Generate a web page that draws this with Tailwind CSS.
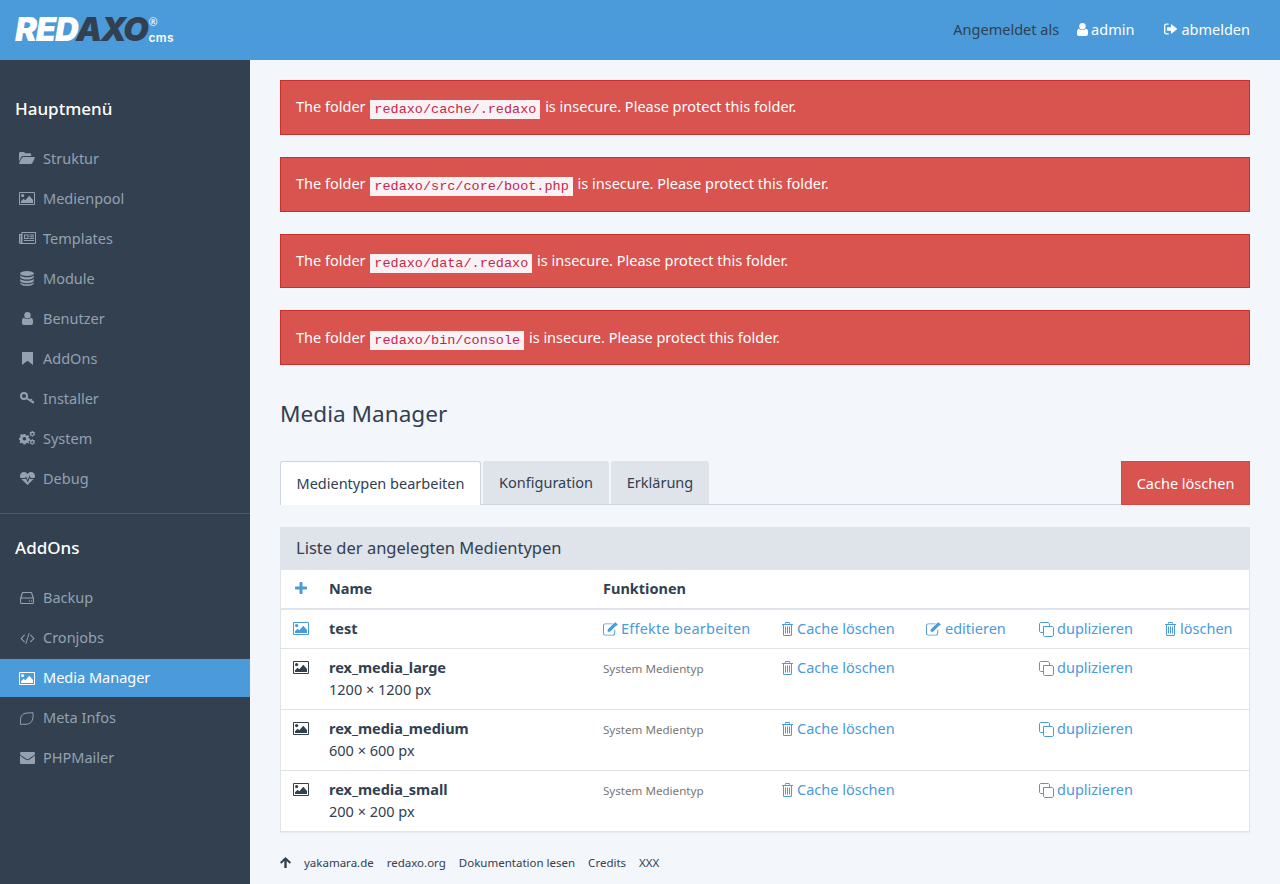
<!DOCTYPE html>
<html lang="de">
<head>
<meta charset="UTF-8" />
<title>Media Manager</title>
<script src="https://cdn.jsdelivr.net/npm/@tailwindcss/browser@4"></script>
</head>
<body class="bg-[#f3f6fb] text-[#324050] font-['Noto_Sans',sans-serif] text-[14.5px] leading-[22px] h-screen overflow-hidden">

<svg class="hidden">
  <symbol id="i-image" viewBox="0 0 16 13"><path fill-rule="evenodd" d="M1 0h14a1 1 0 0 1 1 1v11a1 1 0 0 1-1 1H1a1 1 0 0 1-1-1V1a1 1 0 0 1 1-1zm0 1v11h14V1z"/><circle cx="3.6" cy="3.6" r="1.6"/><path d="M2 11V9.2l2.6-2.4 1.7 1.5 4-4.6L14 8v3z"/></symbol>
  <symbol id="i-folder" viewBox="0 0 16 12"><path d="M0 10V1.4C0 .6.6 0 1.4 0h3C5.2 0 5.800.5 5.800 1.300h5c.8 0 1.400.5 1.400 1.300V4H4.400c-1 0-1.800.5-2.400 1.300z"/><path d="M1 12c-.8 0-1.100-.6-.6-1.200L2.700 6c.5-.7 1.100-1 1.900-1H15c.8 0 1.200.6.700 1.200l-2.300 4.700c-.5.7-1.100 1.100-1.900 1.100z"/></symbol>
  <symbol id="i-news" viewBox="0 0 17 12"><path fill-rule="evenodd" d="M2.500 0H17v10.800c0 .7-.5 1.200-1.200 1.200H1.200C.5 12 0 11.500 0 10.800V2h2.500zm1 1v9.600c0 .2-.1.300-.2.400h12.400c.2 0 .3-.1.300-.3V1zM1 3v7.700c0 .2.100.3.300.3s.2-.1.200-.3V3z"/><path fill-rule="evenodd" d="M5 2.500h4.500V7H5zm1 1V6h2.500V3.500z"/><path d="M10.500 2.500H15v1h-4.500zM10.500 4.300H15v1h-4.500zM10.500 6H15v1h-4.500zM5 8h10v1H5z"/></symbol>
  <symbol id="i-db" viewBox="0 0 14 15"><ellipse cx="7" cy="2.500" rx="6.800" ry="2.500"/><path d="M.2 4.200C1 5.600 4 6.200 7 6.200s6-.6 6.800-2v2C13 7.800 10 8.500 7 8.500S1 7.800.2 6.200zM.2 7.800C1 9.200 4 9.800 7 9.800s6-.6 6.800-2V10c-.8 1.500-3.800 2.200-6.800 2.200S1 11.500.2 10zM.2 11.300c.8 1.400 3.800 2 6.800 2s6-.6 6.800-2v1.200C13 14.200 10 15 7 15s-6-.8-6.800-2.500z"/></symbol>
  <symbol id="i-user" viewBox="0 0 11 13"><circle cx="5.500" cy="3.200" r="3.200"/><path d="M2 5.800c.9.900 2.100 1.300 3.500 1.300S8.100 6.700 9 5.800c1.300.1 2 1.400 2 3.500v1.700c0 1.200-.8 2-2 2H2c-1.200 0-2-.8-2-2V9.300c0-2.100.7-3.400 2-3.500z"/></symbol>
  <symbol id="i-bookmark" viewBox="0 0 11 13"><path d="M0 0h11v13L5.500 8.800 0 13z"/></symbol>
  <symbol id="i-key" viewBox="0 0 15 12"><circle cx="4" cy="4" r="3" fill="none" stroke="currentColor" stroke-width="2"/><path fill="none" stroke="currentColor" stroke-width="1.800" d="M6.300 6 13.800 11M10.300 8.600l1.500-1.500M12.300 10l1-1.200"/></symbol>
  <symbol id="i-cogs" viewBox="0 0 16 14"><path fill-rule="evenodd" d="M4.400 3h2l.3 1.300 1 .4 1.200-.7 1.300 1.300-.7 1.200.4 1 1.300.3v1.900l-1.300.3-.4 1 .7 1.200L9 12.500 7.800 11.800l-1 .4-.4 1.300h-2L4 12.200l-1-.4-1.200.7L.5 11.200l.7-1.200-.4-1L0 8.700V6.800l1.300-.3.4-1L1 4.300 2.300 3l1.200.7 1-.4zm1 3a1.800 1.800 0 1 0 0 3.600 1.800 1.800 0 0 0 0-3.600z"/><path fill-rule="evenodd" d="M12.700 0h1.200l.2.800.6.300.8-.3.500 1-.6.600v.7l.6.500-.5 1-.8-.2-.6.400-.2.800h-1.200l-.2-.800-.6-.4-.8.200-.5-1 .6-.5v-.7l-.6-.6.500-1 .8.300.6-.3zm.6 2a1 1 0 1 0 0 2 1 1 0 0 0 0-2zM12.700 8.200h1.200l.2.800.6.300.8-.3.500 1-.6.600v.7l.6.500-.5 1-.8-.2-.6.400-.2.800h-1.200l-.2-.8-.6-.4-.8.200-.5-1 .6-.5v-.7l-.6-.6.500-1 .8.300.6-.3zm.6 2a1 1 0 1 0 0 2 1 1 0 0 0 0-2z"/></symbol>
  <symbol id="i-heart" viewBox="0 0 15 13"><path d="M4 0c1.400 0 2.700.8 3.500 2C8.300.8 9.600 0 11 0c2.300 0 4 1.700 4 4 0 .7-.2 1.400-.5 2H10.700L9.400 3.500 7.800 8 6 4.500 5.100 6H.5A4.400 4.400 0 0 1 0 4c0-2.300 1.700-4 4-4z"/><path d="M1.300 7h4.400l.2-.4L7.900 10.500 9.600 6l.5 1h3.600L7.500 13z"/></symbol>
  <symbol id="i-hdd" viewBox="0 0 14 12"><path fill-rule="evenodd" d="M3 0h8c.6 0 1 .3 1.200.8L14 6.500V10.500c0 .9-.6 1.500-1.500 1.500h-11C.6 12 0 11.400 0 10.500V6.500L1.800.8C2 .3 2.400 0 3 0zm0 1L1.500 5.600c0-.1.400-.1.500-.1h10c.1 0 .4 0 .5.100L11 1zM2 6.500c-.5 0-1 .4-1 1v3c0 .3.300.5.500.5h11c.2 0 .5-.2.500-.5v-3c0-.6-.5-1-1-1z"/><circle cx="11.700" cy="9" r=".7"/><circle cx="9.500" cy="9" r=".7"/></symbol>
  <symbol id="i-code" viewBox="0 0 15 11"><path d="M4.300 1.500 5 2.200 1.800 5.500 5 8.800l-.7.700L.4 5.500zM10.700 1.500 10 2.200l3.200 3.300L10 8.800l.7.700 3.900-4zM8.700 0l.9.200L6.300 11l-.9-.2z"/></symbol>
  <symbol id="i-leaf" viewBox="0 0 14 13"><path fill="none" stroke="currentColor" d="M13 .7c.3 3.600 0 7-1.600 9.200-1.500 2-4.400 2.500-7.400 2.400-1 0-2 0-3.300.2-.3-1-.3-2-.3-3.500C.4 4.800 1.600 2.800 4 1.700 6.600.6 10 1 13 .7z"/></symbol>
  <symbol id="i-mail" viewBox="0 0 15 12"><path d="M1.300 0h12.400C14.500 0 15 .5 15 1.300c0 .9-.6 1.600-1.300 2.100L8.400 7c-.6.400-1.200.4-1.800 0L1.300 3.400C.6 2.900 0 2.200 0 1.500 0 .6.500 0 1.300 0z"/><path d="M0 3.400c1.900 1.500 4 2.800 5.900 4.300.9.600 2.300.6 3.200 0C11 6.200 13.100 4.900 15 3.400v7.300c0 .7-.6 1.300-1.300 1.300H1.300C.6 12 0 11.400 0 10.700z"/></symbol>
  <symbol id="i-plus" viewBox="0 0 12 12"><path d="M4.500 1c0-.6.400-1 1-1h1c.6 0 1 .4 1 1v3.500H11c.6 0 1 .4 1 1v1c0 .6-.4 1-1 1H7.500V11c0 .6-.4 1-1 1h-1c-.6 0-1-.4-1-1V7.500H1c-.6 0-1-.4-1-1v-1c0-.6.400-1 1-1h3.500z"/></symbol>
  <symbol id="i-edit" viewBox="0 0 16 14"><path d="M2.500 1h8l-1 1h-7C1.700 2 1 2.700 1 3.500v8C1 12.300 1.700 13 2.500 13h8c.8 0 1.500-.7 1.500-1.500V8.300l1-1v4.200c0 1.400-1.100 2.500-2.500 2.500h-8A2.500 2.500 0 0 1 0 11.500v-8A2.500 2.500 0 0 1 2.500 1z"/><path d="M5 7.500 12 .5 14.500 3l-7 7H5zM12.800 0l.4-.2 2.500 2.500-.2.400-.9.900-2.700-2.700z"/></symbol>
  <symbol id="i-trash" viewBox="0 0 11 14"><path fill-rule="evenodd" d="M3.500 0h4L8.400 2H11v1h-1v9.500c0 .8-.6 1.500-1.300 1.500H2.300C1.600 14 1 13.300 1 12.500V3H0V2h2.600zm.3 1-.3 1h4l-.3-1zM2 3v9.500c0 .3.200.5.300.5h6.400c.1 0 .3-.2.300-.5V3z"/><path d="M3 4.500h1v7H3zM5 4.500h1v7H5zM7 4.500h1v7H7z"/></symbol>
  <symbol id="i-files" viewBox="0 0 15 15"><path fill="none" stroke="currentColor" d="M4.500 4.500h8.500c.8 0 1.500.7 1.500 1.500v7c0 .8-.7 1.500-1.500 1.500H6c-.8 0-1.500-.7-1.500-1.500zM4.500 10.500H2c-.8 0-1.500-.7-1.500-1.500V2C.5 1.200 1.200.5 2 .5h7c.8 0 1.500.7 1.500 1.500v2.500"/></symbol>
  <symbol id="i-signout" viewBox="0 0 14 12"><path d="M2.500 0H5v1.500H2.500c-.6 0-1 .4-1 1v7c0 .6.400 1 1 1H5V12H2.500A2.500 2.500 0 0 1 0 9.500v-7A2.500 2.500 0 0 1 2.500 0z"/><path d="M8 1c.2 0 .5.100.6.300l5.200 4.200c.2.200.2.800 0 1L8.600 10.700c-.4.400-1.100.1-1.100-.5V8H4c-.4 0-.8-.4-.8-.8V4.800c0-.4.400-.8.800-.8h3.500V1.800c0-.4.100-.8.500-.8z"/></symbol>
  <symbol id="i-up" viewBox="0 0 11 11"><path d="M5.500 0 11 5.300 9.700 6.700 6.700 3.900V11H4.300V3.900L1.300 6.700 0 5.300z"/></symbol>
</svg>

<!-- Header -->
<header class="h-[60px] bg-[#4b9ad9] flex items-center justify-between pl-[15px] pr-[30px]">
  <a class="flex items-start h-[26px] mb-[3px]" href="#">
    <span class="font-['Inter',sans-serif] font-black italic text-[33px] leading-[26px] tracking-[-1.300px] text-white">RED<span class="text-[#324050]">AXO</span></span>
    <span class="ml-[1px] flex flex-col">
      <span class="text-[11px] leading-[10px] mt-[1px] text-white">®</span>
      <span class="font-['Inter',sans-serif] text-[12px] leading-[11px] mt-[5px] font-semibold tracking-[0.300px] text-white">cms</span>
    </span>
  </a>
  <div class="flex items-center mb-[2px]">
    <span>Angemeldet als</span>
    <a href="#" class="ml-[18px] flex items-center text-white"><svg class="w-[11px] h-[13px] mr-[3px] fill-current"><use href="#i-user"/></svg>admin</a>
    <a href="#" class="ml-[30px] flex items-center text-white"><svg class="w-[13px] h-[12px] mr-[4px] fill-current"><use href="#i-signout"/></svg>abmelden</a>
  </div>
</header>

<div class="flex h-[824px]">
  <!-- Sidebar -->
  <nav class="w-[250px] shrink-0 bg-[#324050] text-[#94a1af] pt-[36px]">
    <h2 class="pl-[15px] h-[26px] leading-[26px] text-[17px] font-medium text-white">Hauptmenü</h2>
    <ul class="mt-[17px] flex flex-col gap-[2px]">
      <li class="h-[38px] pl-[19px] flex items-center"><span class="w-[16px] mr-[8px] flex justify-center"><svg class="w-[16px] h-[12px] fill-current"><use href="#i-folder"/></svg></span>Struktur</li>
      <li class="h-[38px] pl-[19px] flex items-center"><span class="w-[16px] mr-[8px] flex justify-center"><svg class="w-[16px] h-[13px] fill-current"><use href="#i-image"/></svg></span>Medienpool</li>
      <li class="h-[38px] pl-[19px] flex items-center"><span class="w-[16px] mr-[8px] flex justify-center"><svg class="w-[17px] h-[12px] shrink-0 fill-current"><use href="#i-news"/></svg></span>Templates</li>
      <li class="h-[38px] pl-[19px] flex items-center"><span class="w-[16px] mr-[8px] flex justify-center"><svg class="w-[14px] h-[15px] fill-current"><use href="#i-db"/></svg></span>Module</li>
      <li class="h-[38px] pl-[19px] flex items-center"><span class="w-[16px] mr-[8px] flex justify-center"><svg class="w-[11px] h-[13px] fill-current"><use href="#i-user"/></svg></span>Benutzer</li>
      <li class="h-[38px] pl-[19px] flex items-center"><span class="w-[16px] mr-[8px] flex justify-center"><svg class="w-[11px] h-[13px] fill-current"><use href="#i-bookmark"/></svg></span>AddOns</li>
      <li class="h-[38px] pl-[19px] flex items-center"><span class="w-[16px] mr-[8px] flex justify-center"><svg class="w-[15px] h-[12px] fill-current"><use href="#i-key"/></svg></span>Installer</li>
      <li class="h-[38px] pl-[19px] flex items-center"><span class="w-[16px] mr-[8px] flex justify-center"><svg class="w-[16px] h-[14px] fill-current"><use href="#i-cogs"/></svg></span>System</li>
      <li class="h-[38px] pl-[19px] flex items-center"><span class="w-[16px] mr-[8px] flex justify-center"><svg class="w-[15px] h-[13px] fill-current"><use href="#i-heart"/></svg></span>Debug</li>
    </ul>
    <hr class="mt-[16px] border-t border-[#4c5a69]" />
    <h2 class="mt-[21px] pl-[15px] h-[26px] leading-[26px] text-[17px] font-medium text-white">AddOns</h2>
    <ul class="mt-[18px] flex flex-col gap-[2px]">
      <li class="h-[38px] pl-[19px] flex items-center"><span class="w-[16px] mr-[8px] flex justify-center"><svg class="w-[14px] h-[12px] fill-current"><use href="#i-hdd"/></svg></span><span class="mb-[2px]">Backup</span></li>
      <li class="h-[38px] pl-[19px] flex items-center"><span class="w-[16px] mr-[8px] flex justify-center"><svg class="w-[15px] h-[11px] fill-current"><use href="#i-code"/></svg></span><span class="mb-[2px]">Cronjobs</span></li>
      <li class="h-[38px] pl-[19px] flex items-center bg-[#4b9ad9] text-white"><span class="w-[16px] mr-[8px] flex justify-center"><svg class="w-[16px] h-[13px] fill-current"><use href="#i-image"/></svg></span><span class="mb-[2px]">Media Manager</span></li>
      <li class="h-[38px] pl-[19px] flex items-center"><span class="w-[16px] mr-[8px] flex justify-center"><svg class="w-[14px] h-[13px] fill-current"><use href="#i-leaf"/></svg></span><span class="mb-[2px]">Meta Infos</span></li>
      <li class="h-[38px] pl-[19px] flex items-center"><span class="w-[16px] mr-[8px] flex justify-center"><svg class="w-[15px] h-[12px] fill-current"><use href="#i-mail"/></svg></span><span class="mb-[2px]">PHPMailer</span></li>
    </ul>
  </nav>

  <!-- Main -->
  <main class="flex-1 px-[30px] pt-[20px]">
    <div class="flex flex-col gap-[22px]">
      <div class="h-[54.800px] flex items-center px-[15px] bg-[#d9534f] border border-[#c9302c] text-white">
        <p>The folder <code class="font-['Liberation_Mono',monospace] text-[13.500px] leading-[19px] inline-block align-[-1px] px-[4px] mx-[1px] bg-[#f9f2f4] text-[#c7254e]">redaxo/cache/.redaxo</code> is insecure. Please protect this folder.</p>
      </div>
      <div class="h-[54.800px] flex items-center px-[15px] bg-[#d9534f] border border-[#c9302c] text-white">
        <p>The folder <code class="font-['Liberation_Mono',monospace] text-[13.500px] leading-[19px] inline-block align-[-1px] px-[4px] mx-[1px] bg-[#f9f2f4] text-[#c7254e]">redaxo/src/core/boot.php</code> is insecure. Please protect this folder.</p>
      </div>
      <div class="h-[54.800px] flex items-center px-[15px] bg-[#d9534f] border border-[#c9302c] text-white">
        <p>The folder <code class="font-['Liberation_Mono',monospace] text-[13.500px] leading-[19px] inline-block align-[-1px] px-[4px] mx-[1px] bg-[#f9f2f4] text-[#c7254e]">redaxo/data/.redaxo</code> is insecure. Please protect this folder.</p>
      </div>
      <div class="h-[54.800px] flex items-center px-[15px] bg-[#d9534f] border border-[#c9302c] text-white">
        <p>The folder <code class="font-['Liberation_Mono',monospace] text-[13.500px] leading-[19px] inline-block align-[-1px] px-[4px] mx-[1px] bg-[#f9f2f4] text-[#c7254e]">redaxo/bin/console</code> is insecure. Please protect this folder.</p>
      </div>
    </div>

    <h1 class="mt-[31.800px] h-[34px] leading-[34px] text-[22.600px] font-normal">Media Manager</h1>

    <!-- Tabs -->
    <div class="mt-[30px] h-[44px] flex items-stretch justify-between border-b border-[#ced4e0]">
      <div class="flex gap-[2px]">
        <a href="#" class="w-[201px] h-[44px] flex items-center justify-center bg-white border border-b-0 border-[#ced4e0] rounded-t-[3px]">Medientypen bearbeiten</a>
        <a href="#" class="w-[126px] h-[43px] flex items-center justify-center bg-[#dfe3ea] rounded-t-[3px]">Konfiguration</a>
        <a href="#" class="w-[98px] h-[43px] flex items-center justify-center bg-[#dfe3ea] rounded-t-[3px]">Erklärung</a>
      </div>
      <a href="#" class="w-[129px] h-[44px] flex items-center justify-center bg-[#d9534f] border border-[#d64a45] text-white">Cache löschen</a>
    </div>

    <!-- Panel -->
    <section class="mt-[22px]">
      <h3 class="h-[43px] flex items-center px-[16px] bg-[#dfe3ea] text-[16.500px] font-normal">Liste der angelegten Medientypen</h3>
      <div class="bg-white border-x border-b border-[#dfe3ea] shadow-[0_1px_1px_rgba(0,0,0,0.04)]">
        <table class="w-full table-fixed border-separate border-spacing-0 text-left">
          <colgroup>
            <col class="w-[33px]" /><col class="w-[274px]" /><col class="w-[179px]" /><col class="w-[144px]" /><col class="w-[113px]" /><col class="w-[126px]" /><col />
          </colgroup>
          <thead>
            <tr class="h-[40px]">
              <th class="border-b-2 border-[#dfe3ea] pl-[14px] pb-[2px]"><svg class="w-[12px] h-[12px] fill-[#4b9ad9]"><use href="#i-plus"/></svg></th>
              <th class="border-b-2 border-[#dfe3ea] pl-[15px] pb-[2px] font-bold">Name</th>
              <th colspan="5" class="border-b-2 border-[#dfe3ea] pl-[15px] pb-[2px] font-bold">Funktionen</th>
            </tr>
          </thead>
          <tbody class="align-top">
            <tr class="text-[#4b9ad9]">
              <td class="border-b border-[#dfe3ea] pl-[12px] pt-[8px] pb-[8px]"><svg class="w-[16px] h-[13px] mt-[4px] fill-current"><use href="#i-image"/></svg></td>
              <td class="border-b border-[#dfe3ea] pl-[15px] pt-[7px] pb-[9px] font-bold text-[#324050]">test</td>
              <td class="border-b border-[#dfe3ea] pl-[15px] pt-[7px] pb-[9px] whitespace-nowrap tracking-[0.220px]"><svg class="inline-block w-[15px] h-[14px] mr-[3px] align-[-2px] fill-current"><use href="#i-edit"/></svg>Effekte bearbeiten</td>
              <td class="border-b border-[#dfe3ea] pl-[15px] pt-[7px] pb-[9px] whitespace-nowrap"><svg class="inline-block w-[11px] h-[14px] mr-[4px] align-[-2px] fill-current"><use href="#i-trash"/></svg>Cache löschen</td>
              <td class="border-b border-[#dfe3ea] pl-[15px] pt-[7px] pb-[9px] whitespace-nowrap"><svg class="inline-block w-[15px] h-[14px] mr-[4px] align-[-2px] fill-current"><use href="#i-edit"/></svg>editieren</td>
              <td class="border-b border-[#dfe3ea] pl-[15px] pt-[7px] pb-[9px] whitespace-nowrap"><svg class="inline-block w-[15px] h-[15px] mr-[3px] align-[-3px] fill-current"><use href="#i-files"/></svg>duplizieren</td>
              <td class="border-b border-[#dfe3ea] pl-[15px] pt-[7px] pb-[9px] whitespace-nowrap"><svg class="inline-block w-[11px] h-[14px] mr-[4px] align-[-2px] fill-current"><use href="#i-trash"/></svg>löschen</td>
            </tr>
            <tr class="text-[#4b9ad9]">
              <td class="border-b border-[#dfe3ea] pl-[12px] pt-[8px] pb-[8px] text-[#324050]"><svg class="w-[16px] h-[13px] mt-[4px] fill-current"><use href="#i-image"/></svg></td>
              <td class="border-b border-[#dfe3ea] pl-[15px] pt-[7px] pb-[9px] text-[#324050]"><b>rex_media_large</b><br />1200 × 1200 px</td>
              <td class="border-b border-[#dfe3ea] pl-[15px] pt-[10px] pb-[8px] text-[11.600px] text-[#777] leading-[20px]">System Medientyp</td>
              <td class="border-b border-[#dfe3ea] pl-[15px] pt-[7px] pb-[9px] whitespace-nowrap"><svg class="inline-block w-[11px] h-[14px] mr-[4px] align-[-2px] fill-current"><use href="#i-trash"/></svg>Cache löschen</td>
              <td class="border-b border-[#dfe3ea]"></td>
              <td class="border-b border-[#dfe3ea] pl-[15px] pt-[7px] pb-[9px] whitespace-nowrap"><svg class="inline-block w-[15px] h-[15px] mr-[3px] align-[-3px] fill-current"><use href="#i-files"/></svg>duplizieren</td>
              <td class="border-b border-[#dfe3ea]"></td>
            </tr>
            <tr class="text-[#4b9ad9]">
              <td class="border-b border-[#dfe3ea] pl-[12px] pt-[8px] pb-[8px] text-[#324050]"><svg class="w-[16px] h-[13px] mt-[4px] fill-current"><use href="#i-image"/></svg></td>
              <td class="border-b border-[#dfe3ea] pl-[15px] pt-[7px] pb-[9px] text-[#324050]"><b>rex_media_medium</b><br />600 × 600 px</td>
              <td class="border-b border-[#dfe3ea] pl-[15px] pt-[10px] pb-[8px] text-[11.600px] text-[#777] leading-[20px]">System Medientyp</td>
              <td class="border-b border-[#dfe3ea] pl-[15px] pt-[7px] pb-[9px] whitespace-nowrap"><svg class="inline-block w-[11px] h-[14px] mr-[4px] align-[-2px] fill-current"><use href="#i-trash"/></svg>Cache löschen</td>
              <td class="border-b border-[#dfe3ea]"></td>
              <td class="border-b border-[#dfe3ea] pl-[15px] pt-[7px] pb-[9px] whitespace-nowrap"><svg class="inline-block w-[15px] h-[15px] mr-[3px] align-[-3px] fill-current"><use href="#i-files"/></svg>duplizieren</td>
              <td class="border-b border-[#dfe3ea]"></td>
            </tr>
            <tr class="text-[#4b9ad9]">
              <td class="pl-[12px] pt-[8px] pb-[8px] text-[#324050]"><svg class="w-[16px] h-[13px] mt-[4px] fill-current"><use href="#i-image"/></svg></td>
              <td class="pl-[15px] pt-[7px] pb-[9px] text-[#324050]"><b>rex_media_small</b><br />200 × 200 px</td>
              <td class="pl-[15px] pt-[10px] pb-[8px] text-[11.600px] text-[#777] leading-[20px]">System Medientyp</td>
              <td class="pl-[15px] pt-[7px] pb-[9px] whitespace-nowrap"><svg class="inline-block w-[11px] h-[14px] mr-[4px] align-[-2px] fill-current"><use href="#i-trash"/></svg>Cache löschen</td>
              <td></td>
              <td class="pl-[15px] pt-[7px] pb-[9px] whitespace-nowrap"><svg class="inline-block w-[15px] h-[15px] mr-[3px] align-[-3px] fill-current"><use href="#i-files"/></svg>duplizieren</td>
              <td></td>
            </tr>
          </tbody>
        </table>
      </div>
    </section>

    <!-- Footer -->
    <footer class="mt-[20px] h-[22px] flex items-center text-[11.500px]">
      <svg class="w-[11px] h-[11px] mr-[13px] fill-current"><use href="#i-up"/></svg>
      <a href="#" class="mr-[13px]">yakamara.de</a>
      <a href="#" class="mr-[13px]">redaxo.org</a>
      <a href="#" class="mr-[13px]">Dokumentation lesen</a>
      <a href="#" class="mr-[13px]">Credits</a>
      <a href="#">XXX</a>
    </footer>
  </main>
</div>
</body>
</html>
